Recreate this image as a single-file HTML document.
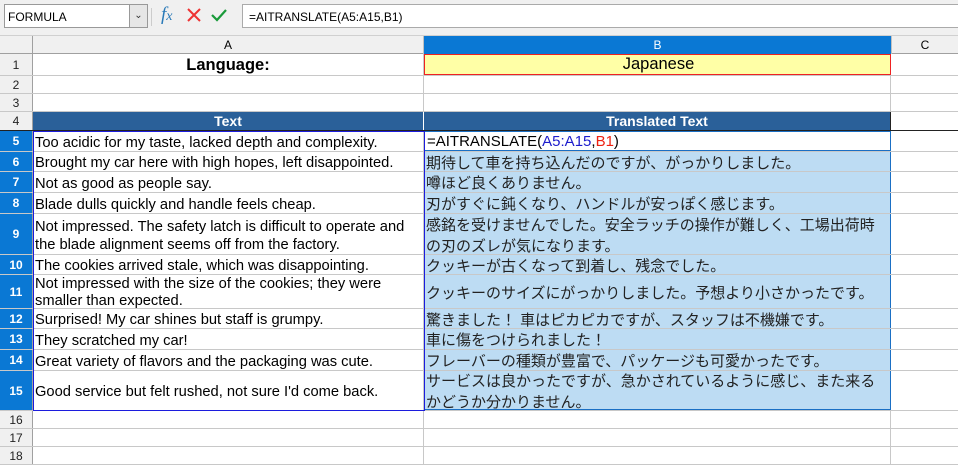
<!DOCTYPE html><html><head><meta charset="utf-8"><style>
*{margin:0;padding:0;box-sizing:border-box}
body{width:958px;height:462px;overflow:hidden;background:#fff;font-family:"Liberation Sans","Noto Sans CJK JP",sans-serif;position:relative;font-size:14.7px;color:#000}
.a{position:absolute}
.tb{left:0;top:0;width:958px;height:36px;background:#f0f0f0;border-bottom:1px solid #d0d0d0}
.r{position:absolute;left:0;width:958px;border-bottom:1px solid #c8c8c8}
.h{position:absolute;left:0;top:0;width:33px;height:100%;background:#f0f0f0;border-right:1px solid #a0a0a0;text-align:center;font-size:12px;color:#222;display:flex;align-items:center;justify-content:center}
.hs{background:#0a78d4;color:#fff;font-weight:bold}
.ca{position:absolute;left:33px;top:0;width:391px;height:100%;border-right:1px solid #c8c8c8;padding-left:2px;padding-right:14px;padding-top:3px;display:flex;align-items:center;line-height:18px}
.cb{position:absolute;left:424px;top:0;width:467px;height:100%;border-right:1px solid #c8c8c8;padding-left:2px;display:flex;align-items:center;line-height:21px}
.sel{background:#bddcf3;border-right:1px solid #1a6fc4;font-size:15px;color:#222;padding-right:14px;padding-top:3px}
.th{background:#2a6099;color:#fff;font-weight:bold;justify-content:center;border-right:1px solid #fff;font-size:14px;padding:0}
</style></head><body>
<div class="a tb"></div>
<div class="a" style="left:4px;top:4px;width:144px;height:24px;background:#fff;border:1px solid #999;font-size:12px;padding:5px 3px">FORMULA</div>
<div class="a" style="left:129px;top:5px;width:18px;height:22px;background:#e6e6e6;border-left:1px solid #999;font-size:10px;text-align:center;line-height:22px;color:#333">&#8964;</div>
<div class="a" style="left:151px;top:8px;width:1px;height:18px;background:#ccc"></div>
<div class="a" style="left:161px;top:4px;color:#2a7ab8;font-family:'Liberation Serif',serif;font-style:italic;font-size:19px">f<span style="font-size:14px">x</span></div>
<svg class="a" style="left:186px;top:7px" width="16" height="16" viewBox="0 0 16 16"><path d="M2 2L14 14M14 2L2 14" stroke="#e33" stroke-width="2"/></svg>
<svg class="a" style="left:210px;top:7px" width="18" height="16" viewBox="0 0 18 16"><path d="M2 8L7 13L16 3" stroke="#1a9a3a" stroke-width="2.2" fill="none"/></svg>
<div class="a" style="left:242px;top:4px;width:720px;height:24px;background:#fff;border:1px solid #aaa;font-size:12px;padding:5px 6px">=AITRANSLATE(A5:A15,B1)</div>
<div class="a" style="left:0;top:36px;width:958px;height:18px;background:#f0f0f0;border-bottom:1px solid #a0a0a0"></div>
<div class="a" style="left:32px;top:36px;width:1px;height:18px;background:#a0a0a0"></div>
<div class="a" style="left:33px;top:36px;width:391px;height:18px;text-align:center;font-size:12px;line-height:18px;border-right:1px solid #c0c0c0">A</div>
<div class="a" style="left:424px;top:36px;width:467px;height:18px;text-align:center;font-size:12px;line-height:18px;background:#0a78d4;color:#fff">B</div>
<div class="a" style="left:891px;top:36px;width:67px;height:18px;text-align:center;font-size:12px;line-height:18px;border-left:1px solid #c0c0c0">C</div>

<div class="r" style="top:54px;height:22px"><div class="h">1</div><div class="ca" style="justify-content:center;font-weight:bold;font-size:16.5px;padding:0">Language:</div><div class="cb" style="background:#ffffa6;border:1.5px solid #e22;justify-content:center;font-size:16.5px">Japanese</div></div>
<div class="r" style="top:76px;height:18px"><div class="h">2</div><div class="ca"></div><div class="cb"></div></div>
<div class="r" style="top:94px;height:18px"><div class="h">3</div><div class="ca"></div><div class="cb"></div></div>
<div class="r" style="top:112px;height:19px;border-bottom:1px solid #222"><div class="h">4</div><div class="ca th">Text</div><div class="cb th" style="border-right:1px solid #222">Translated Text</div></div>
<div class="r" style="top:131px;height:21px"><div class="h hs">5</div><div class="ca">Too acidic for my taste, lacked depth and complexity.</div><div class="cb" style="border:1px solid #1a6fc4;font-size:15px">=AITRANSLATE(<span style="color:#1c1ccc">A5:A15</span>,<span style="color:#e21">B1</span>)</div></div>
<div class="r" style="top:152px;height:20px"><div class="h hs">6</div><div class="ca">Brought my car here with high hopes, left disappointed.</div><div class="cb sel">期待して車を持ち込んだのですが、がっかりしました。</div></div>
<div class="r" style="top:172px;height:21px"><div class="h hs">7</div><div class="ca">Not as good as people say.</div><div class="cb sel">噂ほど良くありません。</div></div>
<div class="r" style="top:193px;height:21px"><div class="h hs">8</div><div class="ca">Blade dulls quickly and handle feels cheap.</div><div class="cb sel">刃がすぐに鈍くなり、ハンドルが安っぽく感じます。</div></div>
<div class="r" style="top:214px;height:41px"><div class="h hs">9</div><div class="ca">Not impressed. The safety latch is difficult to operate and the blade alignment seems off from the factory.</div><div class="cb sel">感銘を受けませんでした。安全ラッチの操作が難しく、工場出荷時の刃のズレが気になります。</div></div>
<div class="r" style="top:255px;height:20px"><div class="h hs">10</div><div class="ca">The cookies arrived stale, which was disappointing.</div><div class="cb sel">クッキーが古くなって到着し、残念でした。</div></div>
<div class="r" style="top:275px;height:34px"><div class="h hs">11</div><div class="ca" style="line-height:17px">Not impressed with the size of the cookies; they were smaller than expected.</div><div class="cb sel">クッキーのサイズにがっかりしました。予想より小さかったです。</div></div>
<div class="r" style="top:309px;height:20px"><div class="h hs">12</div><div class="ca">Surprised! My car shines but staff is grumpy.</div><div class="cb sel">驚きました！ 車はピカピカですが、スタッフは不機嫌です。</div></div>
<div class="r" style="top:329px;height:21px"><div class="h hs">13</div><div class="ca">They scratched my car!</div><div class="cb sel">車に傷をつけられました！</div></div>
<div class="r" style="top:350px;height:21px"><div class="h hs">14</div><div class="ca">Great variety of flavors and the packaging was cute.</div><div class="cb sel">フレーバーの種類が豊富で、パッケージも可愛かったです。</div></div>
<div class="r" style="top:371px;height:40px"><div class="h hs">15</div><div class="ca">Good service but felt rushed, not sure I'd come back.</div><div class="cb sel" style="border-bottom:1px solid #1a6fc4">サービスは良かったですが、急かされているように感じ、また来るかどうか分かりません。</div></div>
<div class="r" style="top:411px;height:18px"><div class="h">16</div><div class="ca"></div><div class="cb"></div></div>
<div class="r" style="top:429px;height:18px"><div class="h">17</div><div class="ca"></div><div class="cb"></div></div>
<div class="r" style="top:447px;height:18px"><div class="h">18</div><div class="ca"></div><div class="cb"></div></div>
<div class="a" style="left:33px;top:131px;width:392px;height:280px;border:1.5px solid #1c1cdd"></div>
</body></html>
